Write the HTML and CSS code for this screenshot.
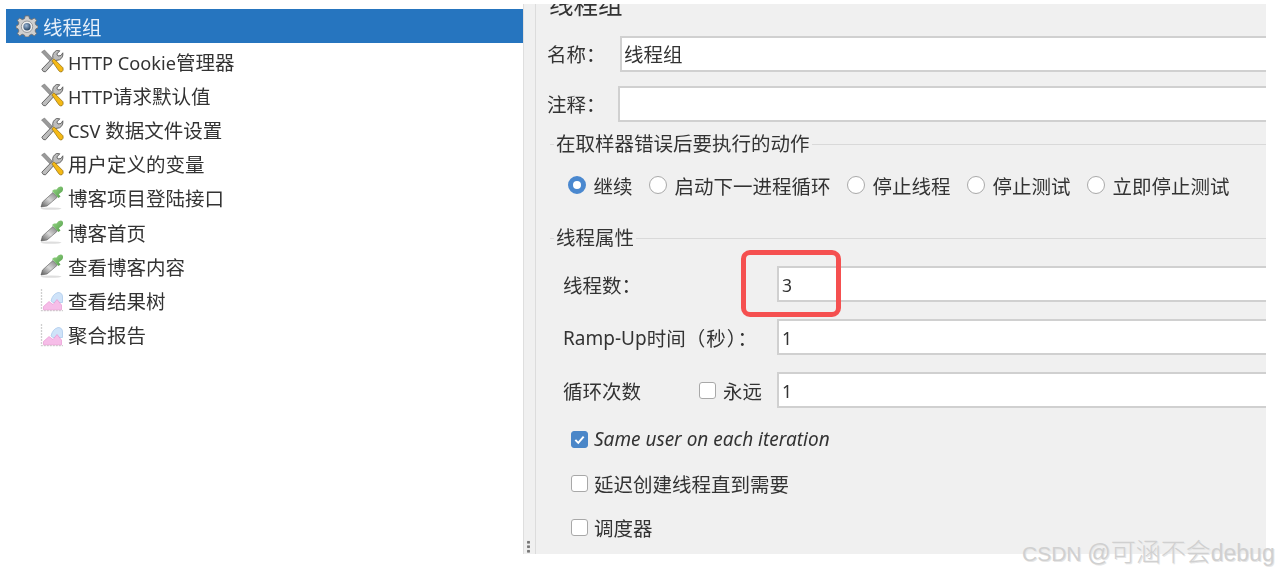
FILE: index.html
```html
<!DOCTYPE html>
<html lang="zh-CN">
<head>
<meta charset="utf-8">
<title>线程组</title>
<link rel="stylesheet" href="styles.css">
</head>
<body>
<svg class="defs" width="0" height="0" aria-hidden="true">
  <defs>
    <linearGradient id="bulb" x1="0" y1="0" x2="1" y2="1"><stop offset="0" stop-color="#9ad98a"/><stop offset="1" stop-color="#4f9a45"/></linearGradient>
    <linearGradient id="glass" x1="0" y1="1" x2="1" y2="0"><stop offset="0" stop-color="#5a5a5a"/><stop offset=".5" stop-color="#d8d8d8"/><stop offset="1" stop-color="#777"/></linearGradient>
    <radialGradient id="hub" cx=".4" cy=".35" r=".7"><stop offset="0" stop-color="#9db8d8"/><stop offset="1" stop-color="#21405f"/></radialGradient>
    <symbol id="tools" viewBox="0 0 24 24">
      <path d="M1.500 3 L4.500 1 L13.500 10.500 L11 13 Z" fill="#9a9a9a" stroke="#666" stroke-width=".5"/>
      <path d="M1.800 20.200 L12.800 8.800 Q12 4 16.500 1.500 L19.800 1.800 L16.800 5 L18 7 L21 6.500 L22.800 3.800 Q23.500 8.500 19.500 10.800 L15.500 11.500 L5.500 22.800 Q3 23.500 1.800 20.200 Z" fill="#bdbdbd" stroke="#585858" stroke-width=".9"/>
      <path d="M11.800 11.800 L14 9.800 L23 18.800 Q23.800 21.500 22 22.700 Q20 23.500 18.800 21.800 Z" fill="#f5b915" stroke="#8c6a10" stroke-width=".7"/>
    </symbol>
    <symbol id="dropper" viewBox="0 0 24 24">
      <ellipse cx="11" cy="22.600" rx="10.500" ry="1.200" fill="#dedede"/>
      <path d="M1 21 L2.500 16 L13 6.500 L17.500 11 L7 20 Z" fill="url(#glass)" stroke="#555" stroke-width=".6"/>
      <path d="M12 5 L18.500 12 L20.500 10.500 L18.800 8.300 L22.300 5.500 Q24 2.500 22 .8 Q19 -.5 16.500 3.500 L14 3.500 Z" fill="url(#bulb)"/>
    </symbol>
    <symbol id="chart" viewBox="0 0 24 24">
      <path d="M1.500 1 V22.700 H23" fill="none" stroke="#cfcfcf" stroke-width="1.300" stroke-dasharray="2 1"/>
      <path d="M11 13 Q12.500 6 18 4.500 Q22.500 4.500 22.500 9 V14.500 H13 Z" fill="#cfe3f9" stroke="#a6c6ea" stroke-width=".7"/>
      <path d="M3.500 21.800 V18.500 L9 13.500 L13 16.500 L17 11.500 L21.500 17 V21.800 Z" fill="#f6bde8" stroke="#e58fcf" stroke-width=".6"/>
    </symbol>
    <symbol id="gear" viewBox="0 0 24 24">
      <path d="M10 1 H14 L14.700 4 L17.200 5 L20 3.300 L22.500 5.800 L20.800 8.600 L21.800 11 L24 11.700 V14.300 L21.800 15 L20.800 17.500 L22.500 20.300 L20 22.800 L17.200 21 L14.700 22 L14 24 H10 L9.300 22 L6.800 21 L4 22.800 L1.500 20.300 L3.200 17.500 L2.200 15 L0 14.300 V11.700 L2.200 11 L3.200 8.600 L1.500 5.800 L4 3.300 L6.800 5 L9.300 4 Z" fill="#cfcfcf" stroke="#6b6e72" stroke-width="1"/>
      <circle cx="12" cy="12.800" r="6.200" fill="#eeeeee" stroke="#7c7f83" stroke-width=".8"/>
      <circle cx="12" cy="12.800" r="4" fill="url(#hub)"/>
    </symbol>
  </defs>
</svg>

<main class="app">
  <nav class="tree">
    <div class="node node-selected">
      <svg class="icon icon-gear"><use href="#gear"/></svg>
      <span>线程组</span>
    </div>
    <ul class="children">
      <li class="node"><svg class="icon"><use href="#tools"/></svg><span><span class="lat">HTTP Cookie</span>管理器</span></li>
      <li class="node"><svg class="icon"><use href="#tools"/></svg><span><span class="lat">HTTP</span>请求默认值</span></li>
      <li class="node"><svg class="icon"><use href="#tools"/></svg><span><span class="lat">CSV </span>数据文件设置</span></li>
      <li class="node"><svg class="icon"><use href="#tools"/></svg><span>用户定义的变量</span></li>
      <li class="node"><svg class="icon"><use href="#dropper"/></svg><span>博客项目登陆接口</span></li>
      <li class="node"><svg class="icon"><use href="#dropper"/></svg><span>博客首页</span></li>
      <li class="node"><svg class="icon"><use href="#dropper"/></svg><span>查看博客内容</span></li>
      <li class="node"><svg class="icon"><use href="#chart"/></svg><span>查看结果树</span></li>
      <li class="node"><svg class="icon"><use href="#chart"/></svg><span>聚合报告</span></li>
    </ul>
  </nav>

  <section class="panel">
    <div class="splitter"><span class="grip"></span></div>
    <div class="form">
      <div class="title">线程组</div>
      <div class="row row-name"><label>名称：</label><div class="field">线程组</div></div>
      <div class="row row-note"><label>注释：</label><div class="field"></div></div>

      <fieldset class="group group-error">
        <legend>在取样器错误后要执行的动作</legend>
        <div class="radios">
          <span class="option"><i class="radio radio-on"></i>继续</span>
          <span class="option"><i class="radio"></i>启动下一进程循环</span>
          <span class="option"><i class="radio"></i>停止线程</span>
          <span class="option"><i class="radio"></i>停止测试</span>
          <span class="option"><i class="radio"></i>立即停止测试</span>
        </div>
      </fieldset>

      <fieldset class="group group-props">
        <legend>线程属性</legend>
        <div class="props">
          <div class="prop"><label>线程数：</label><div class="field num">3</div></div>
          <div class="prop"><label><span class="ramp">Ramp-Up</span>时间<span class="wide">（秒）：</span></label><div class="field num">1</div></div>
          <div class="prop"><label class="loop-label">循环次数<span class="forever"><i class="check"></i>永远</span></label><div class="field num">1</div></div>
        </div>
        <div class="checks">
          <div class="check-row"><i class="check check-on"><svg viewBox="0 0 18 18"><path d="M4 9.500 L7.500 13 L14 5.500" fill="none" stroke="#fff" stroke-width="2.400"/></svg></i><em class="lat-em">Same user on each iteration</em></div>
          <div class="check-row"><i class="check"></i>延迟创建线程直到需要</div>
          <div class="check-row"><i class="check"></i>调度器</div>
        </div>
      </fieldset>
    </div>
  </section>
</main>
<div class="highlight"></div>
<div class="watermark">CSDN <span class="wm-end">@</span><span class="wm-cjk">可涵不会</span><span class="wm-end">debug</span></div>
</body>
</html>
```
FILE: styles.css
```css
* { box-sizing: border-box; }
html, body { margin: 0; height: 100%; }
body {
  position: relative;
  width: 1279px;
  height: 574px;
  overflow: hidden;
  background: #fff;
  color: #333;
  font-family: "Noto Sans", "Noto Sans CJK SC", sans-serif;
  font-size: 19.5px;
}
.defs { position: absolute; }
.app { display: flex; height: 574px; }
.lat { font-size: 18.2px; }
.ramp { font-size: 19px; }
.wide { letter-spacing: 1px; }

/* tree */
.tree { width: 523px; flex: none; padding-top: 9px; }
.children { list-style: none; margin: 1px 0 0; padding: 0 0 0 40px; }
.node { display: flex; align-items: center; height: 34.2px; gap: 4px; filter: blur(.35px); }
.node-selected {
  margin-left: 6px;
  height: 34px;
  padding-left: 10px;
  background: #2675bf;
  color: #e6effa;
  gap: 5px;
}
.icon { width: 24px; height: 24px; flex: none; }
.icon-gear { width: 22px; height: 22px; }

/* right panel */
.panel {
  display: flex;
  width: 743px;
  height: 550px;
  margin-top: 4px;
  background: #f0f0f0;
  overflow: hidden;
}
.splitter {
  position: relative;
  width: 13px;
  flex: none;
  border-left: 1px solid #dedede;
  border-right: 1px solid #dcdcdc;
}
.grip {
  position: absolute;
  left: 3px;
  bottom: 0;
  width: 3px;
  height: 14px;
  background: radial-gradient(circle, #777 1.300px, transparent 1.600px) 0 0 / 3px 4.500px;
}
.form { flex: 1; min-width: 0; margin-top: -11px; filter: blur(.3px); }

.title { height: 24px; line-height: 24px; padding-left: 13px; font-size: 24.5px; }
.row { display: flex; height: 36px; padding-left: 11px; }
.row label { line-height: 38px; flex: none; }
.row-name { margin-top: 19px; }
.row-name label { width: 73px; }
.row-note { margin-top: 14px; }
.row-note label { width: 71px; }
.field {
  flex: 1;
  min-width: 0;
  height: 36px;
  line-height: 34px;
  padding-left: 2px;
  background: #fff;
  border: solid #d0d0d0;
  border-width: 2px 0 2px 2px;
}
.field.num { font-size: 17.5px; padding-left: 3px; }

/* titled groups */
.group {
  margin: 0 0 0 14px;
  padding: 0;
  min-width: 0;
  border: 0;
  border-top: 1px solid #d9d9d9;
}
.group legend {
  height: 28px;
  line-height: 28px;
  margin-left: 4px;
  padding: 0 2px;
}
.group-error { height: 94px; margin-top: 8px; }
.radios {
  display: flex;
  align-items: center;
  gap: 16px;
  height: 32px;
  margin-top: 11px;
  padding-left: 17.500px;
}
.option { display: inline-flex; align-items: center; gap: 8px; }
.radio {
  width: 18px;
  height: 18px;
  flex: none;
  border: 1.500px solid #a8a8a8;
  border-radius: 50%;
  background: #fff;
}
.radio-on { border: 5.500px solid #4a88cf; }

.props { display: flex; flex-direction: column; gap: 17px; margin-top: 14px; }
.prop { display: flex; height: 36px; padding-left: 13px; }
.prop label {
  display: flex;
  align-items: center;
  width: 214px;
  flex: none;
  height: 37px;
}
.forever { display: inline-flex; align-items: center; gap: 7px; margin-left: 58px; }

.check {
  display: block;
  width: 17px;
  height: 17px;
  flex: none;
  border: 1.500px solid #a8a8a8;
  border-radius: 3px;
  background: #fff;
}
.check svg { display: block; }
.check-on { padding: 0; border-color: #4a86c8; background: #4a86c8; }
.checks { margin-top: 9px; }
.check-row {
  display: flex;
  align-items: center;
  gap: 6px;
  height: 44px;
  padding-left: 21px;
}
.lat-em { font-size: 19px; }

/* annotations over the screenshot */
.highlight {
  position: absolute;
  left: 741px;
  top: 250px;
  width: 100px;
  height: 67px;
  border: 5px solid #f55050;
  border-radius: 9px;
}
.watermark {
  position: absolute;
  left: 1022px;
  top: 536px;
  white-space: nowrap;
  font-family: "Liberation Sans", "Noto Sans CJK SC", sans-serif;
  font-size: 21px;
  line-height: 32px;
  color: #d0d0d0;
  text-shadow: 1px 1px 0 #e6e6e6;
}
.wm-cjk { font-size: 25px; font-weight: 300; }
.wm-end { font-size: 23px; }
```
